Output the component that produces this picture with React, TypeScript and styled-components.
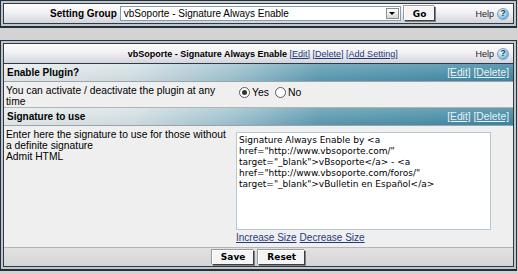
import React from 'react';
import styled, { createGlobalStyle } from 'styled-components';

const GlobalStyle = createGlobalStyle`
  body {
    margin: 0;
    background: #d3d3d3;
    font-family: "Liberation Sans", Arial, sans-serif;
    font-size: 10.3px;
    color: #000;
  }
`;

const Page = styled.div`
  width: 517px;
  display: flex;
  flex-direction: column;
  gap: 12px;
`;

const Frame = styled.div`
  border: 1px solid #25313a;
  border-bottom-width: 2px;
  padding: 2px;
  background: #bfc5ca;
`;

const Inner = styled.div`
  border: 1px solid #2e3a44;
  background: #efefef;
  display: flex;
  flex-direction: column;
`;

const TopBar = styled.div`
  height: 19px;
  display: flex;
  align-items: center;
  background: linear-gradient(#ffffff, #f1f1f4 45%, #d4d4dc);
  padding: 0 4px 0 0;
`;

const Group = styled.div`
  flex: 1;
  display: flex;
  justify-content: center;
  align-items: center;
  gap: 3px;
  padding-left: 6px;
`;

const Label = styled.b`
  font-size: 10px;
`;

const Select = styled.div`
  width: 281px;
  height: 15px;
  border: 1px solid #7f9db9;
  background: #fff;
  display: flex;
  align-items: center;
  padding-left: 3px;
  box-sizing: border-box;
  font-size: 10px;
`;

const SelectText = styled.span`
  flex: 1;
`;

const Arrow = styled.span`
  width: 13px;
  height: 11px;
  margin-right: 1px;
  border: 1px solid #8c8c8c;
  background: linear-gradient(#ffffff, #d8d8d8);
  box-sizing: border-box;
  display: flex;
  align-items: center;
  justify-content: center;
  &::after {
    content: '';
    border-left: 3px solid transparent;
    border-right: 3px solid transparent;
    border-top: 3px solid #000;
  }
`;

const Button = styled.button`
  font-family: "DejaVu Sans", Verdana, sans-serif;
  font-weight: bold;
  font-size: 9px;
  height: 15px;
  padding: 0 8px;
  background: #f4f4f4;
  border: 1px solid;
  border-color: #ffffff #404040 #404040 #ffffff;
  box-shadow: 1px 1px 0 #808080, -1px -1px 0 #9a9a9a;
  color: #000;
  line-height: 12px;
`;

const Help = styled.div`
  display: flex;
  align-items: center;
  gap: 3px;
  font-size: 9px;
  color: #222;
`;

const HelpIcon = styled.span`
  width: 12px;
  height: 12px;
  border-radius: 50%;
  background: radial-gradient(circle at 35% 30%, #ffffff, #a9d4ee 45%, #4b8fc2);
  border: 1px solid #7aa5c6;
  box-sizing: border-box;
  font-size: 9px;
  font-weight: bold;
  color: #20405a;
  display: flex;
  align-items: center;
  justify-content: center;
  line-height: 1;
`;

const TitleBar = styled(TopBar)`
  border-bottom: 1px solid #2e3a44;
`;

const Title = styled.div`
  flex: 1;
  text-align: center;
  padding-left: 46px;
  font-size: 9px;
`;

const Link = styled.a<{ light?: boolean }>`
  color: ${({ light }) => (light ? '#e9f2f6' : '#1f3a7a')};
  text-decoration: underline;
  cursor: pointer;
`;

const Category = styled.div`
  height: 17px;
  display: flex;
  align-items: center;
  justify-content: space-between;
  padding: 0 4px 0 3px;
  background:
    linear-gradient(rgba(255, 255, 255, 0.18), rgba(0, 0, 0, 0.04)),
    linear-gradient(to right, #e7ecee 0%, #d6e2e6 25%, #9ec3d0 45%, #5c9bb2 62%, #3c87a2 100%);
  border-bottom: 1px solid #9aa4aa;
`;

const CatTitle = styled.b`
  font-size: 10px;
`;

const Row = styled.div<{ h: number }>`
  height: ${({ h }) => h}px;
  display: grid;
  grid-template-columns: 232px 1fr;
  border-bottom: 1px solid #b4b4b4;
  box-sizing: border-box;
`;

const Desc = styled.div`
  padding: 3px 3px 0 2px;
  line-height: 11px;
`;

const Field = styled.div`
  padding: 4px 0 0 0;
  display: flex;
  flex-direction: column;
  gap: 2px;
`;

const Radios = styled.div`
  display: flex;
  align-items: center;
  gap: 6px;
  font-size: 10.4px;
  padding: 1px 0 0 3px;
`;

const RadioItem = styled.label`
  display: flex;
  align-items: center;
  gap: 2px;
`;

const Radio = styled.span<{ checked?: boolean }>`
  width: 11px;
  height: 11px;
  border-radius: 50%;
  border: 1px solid #5a5a5a;
  background: #fff;
  box-sizing: border-box;
  display: flex;
  align-items: center;
  justify-content: center;
  &::after {
    content: '';
    width: 5px;
    height: 5px;
    border-radius: 50%;
    background: ${({ checked }) => (checked ? '#333' : 'transparent')};
  }
`;

const TextArea = styled.textarea`
  width: 255px;
  height: 98px;
  margin: 2px 0 0 0;
  border: 1px solid #b5c8d6;
  background: #fff;
  font-family: "DejaVu Sans", Verdana, sans-serif;
  font-size: 9px;
  line-height: 11px;
  padding: 2px 2px;
  box-sizing: border-box;
  resize: none;
  overflow: hidden;
  color: #000;
`;

const Links = styled.div`
  display: flex;
  gap: 3px;
  font-size: 10px;
`;

const Footer = styled.div`
  height: 18px;
  display: flex;
  justify-content: center;
  align-items: center;
  gap: 4px;
  background: linear-gradient(#e2e2e2, #d4d4d4);
`;

const signature =
  'Signature Always Enable by <a href="http://www.vbsoporte.com/" target="_blank">vBsoporte</a> - <a href="http://www.vbsoporte.com/foros/" target="_blank">vBulletin en Español</a>';

const HelpLink: React.FC = () => (
  <Help>
    Help <HelpIcon>?</HelpIcon>
  </Help>
);

const App: React.FC = () => (
  <>
    <GlobalStyle />
    <Page>
      <Frame>
        <Inner>
          <TopBar>
            <Group>
              <Label>Setting Group</Label>
              <Select>
                <SelectText>vbSoporte - Signature Always Enable</SelectText>
                <Arrow />
              </Select>
              <Button>Go</Button>
            </Group>
            <HelpLink />
          </TopBar>
        </Inner>
      </Frame>

      <Frame>
        <Inner>
          <TitleBar>
            <Title>
              <b>vbSoporte - Signature Always Enable</b> <Link>[Edit]</Link> <Link>[Delete]</Link>{' '}
              <Link>[Add Setting]</Link>
            </Title>
            <HelpLink />
          </TitleBar>

          <Category>
            <CatTitle>Enable Plugin?</CatTitle>
            <span>
              <Link light>[Edit]</Link> <Link light>[Delete]</Link>
            </span>
          </Category>
          <Row h={26}>
            <Desc>You can activate / deactivate the plugin at any time</Desc>
            <Field>
              <Radios>
                <RadioItem>
                  <Radio checked /> Yes
                </RadioItem>
                <RadioItem>
                  <Radio /> No
                </RadioItem>
              </Radios>
            </Field>
          </Row>

          <Category>
            <CatTitle>Signature to use</CatTitle>
            <span>
              <Link light>[Edit]</Link> <Link light>[Delete]</Link>
            </span>
          </Category>
          <Row h={122}>
            <Desc>
              Enter here the signature to use for those without a definite signature
              <br />
              Admit HTML
            </Desc>
            <Field>
              <TextArea readOnly defaultValue={signature} />
              <Links>
                <Link>Increase Size</Link>
                <Link>Decrease Size</Link>
              </Links>
            </Field>
          </Row>

          <Footer>
            <Button>Save</Button>
            <Button>Reset</Button>
          </Footer>
        </Inner>
      </Frame>
    </Page>
  </>
);

export default App;
